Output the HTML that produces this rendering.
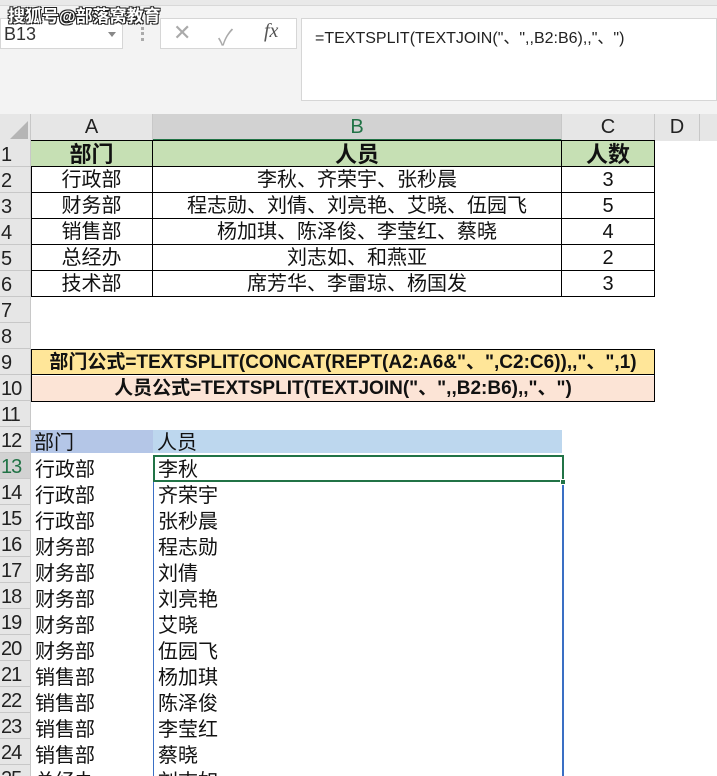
<!DOCTYPE html><html><head><meta charset="utf-8"><style>
*{margin:0;padding:0;box-sizing:border-box}
html,body{width:717px;height:776px;overflow:hidden}
body{background:#fff;position:relative;font-family:"Liberation Sans","Noto Sans CJK SC",sans-serif}
.a{position:absolute}
.rh{position:absolute;left:0;width:31px;height:26px;background:#e6e6e6;border-bottom:1px solid #c8c8c8;border-right:1px solid #c8c8c8;font-size:20px;color:#222;padding-left:1px;line-height:28px;letter-spacing:-1px}
.ch{position:absolute;top:114px;height:27px;background:#e6e6e6;border-right:1px solid #c8c8c8;font-size:20px;text-align:center;line-height:27px;color:#222}
.c{position:absolute;height:26px;line-height:27px;font-size:20px;color:#111;white-space:nowrap}
.t{border-right:1.5px solid #000;border-bottom:1.5px solid #000;text-align:center}
</style></head><body>
<div class="a" style="left:0;top:0;width:717px;height:114px;background:#f3f3f3"></div>
<div class="a" style="left:0;top:0;width:717px;height:6px;background:#e9e9e9;border-bottom:1px solid #d8d8d8"></div>
<div class="a" style="left:0;top:18px;width:123px;height:31px;background:#fff;border:1px solid #d6d6d6"></div>
<div class="a" style="left:4px;top:24px;font-size:18px;color:#333">B13</div>
<div class="a" style="left:108px;top:32px;border-left:4px solid transparent;border-right:4px solid transparent;border-top:5px solid #888"></div>
<div class="a" style="left:141px;top:27px;width:3px;height:14px;border-left:3px dotted #aaa"></div>
<div class="a" style="left:8px;top:2px;font-size:17px;font-weight:bold;color:#fff;text-shadow:1px 1px 0 #222,-1px -1px 0 #222,1px -1px 0 #222,-1px 1px 0 #222">搜狐号@部落窝教育</div>
<div class="a" style="left:160px;top:18px;width:137px;height:31px;background:#fff;border:1px solid #d6d6d6"></div>
<div class="a" style="left:173px;top:20px;font-size:22px;color:#aaa">✕</div>
<div class="a" style="left:218px;top:20px;font-size:22px;color:#aaa">✓</div>
<div class="a" style="left:264px;top:20px;font-size:20px;color:#555;font-family:'Liberation Serif',serif;font-style:italic">fx</div>
<div class="a" style="left:301px;top:18px;width:416px;height:83px;background:#fff;border:1px solid #d6d6d6"></div>
<div class="a" style="left:315px;top:24px;font-size:16px;color:#222">=TEXTSPLIT(TEXTJOIN("、",,B2:B6),,"、")</div>
<div class="ch" style="left:0;width:31px"><div class="a" style="right:2px;bottom:2px;border-left:18px solid transparent;border-bottom:18px solid #b5b5b5"></div></div>
<div class="ch" style="left:31px;width:122px">A</div>
<div class="ch" style="left:153px;width:409px;background:#d2d2d2;border-bottom:2px solid #217346;color:#217346">B</div>
<div class="ch" style="left:562px;width:93px">C</div>
<div class="ch" style="left:655px;width:45px">D</div>
<div class="ch" style="left:700px;width:17px;border-right:none"></div>
<div class="rh" style="top:141px">1</div><div class="rh" style="top:167px">2</div><div class="rh" style="top:193px">3</div><div class="rh" style="top:219px">4</div><div class="rh" style="top:245px">5</div><div class="rh" style="top:271px">6</div><div class="rh" style="top:297px">7</div><div class="rh" style="top:323px">8</div><div class="rh" style="top:349px">9</div><div class="rh" style="top:375px">10</div><div class="rh" style="top:401px">11</div><div class="rh" style="top:427px">12</div><div class="rh" style="top:453px;color:#217346;background:#d2d2d2">13</div><div class="rh" style="top:479px">14</div><div class="rh" style="top:505px">15</div><div class="rh" style="top:531px">16</div><div class="rh" style="top:557px">17</div><div class="rh" style="top:583px">18</div><div class="rh" style="top:609px">19</div><div class="rh" style="top:635px">20</div><div class="rh" style="top:661px">21</div><div class="rh" style="top:687px">22</div><div class="rh" style="top:713px">23</div><div class="rh" style="top:739px">24</div><div class="rh" style="top:765px">25</div>
<div class="a" style="left:31px;top:140px;width:624px;height:157px;border-top:1.5px solid #000;border-left:1.5px solid #000"></div>
<div class="c t" style="left:31px;top:141px;width:122px;background:#c6e0b4;font-weight:bold;font-size:22px">部门</div>
<div class="c t" style="left:153px;top:141px;width:409px;background:#c6e0b4;font-weight:bold;font-size:22px">人员</div>
<div class="c t" style="left:562px;top:141px;width:93px;background:#c6e0b4;font-weight:bold;font-size:22px">人数</div>
<div class="c t" style="left:31px;top:167px;width:122px">行政部</div><div class="c t" style="left:153px;top:167px;width:409px">李秋、齐荣宇、张秒晨</div><div class="c t" style="left:562px;top:167px;width:93px">3</div>
<div class="c t" style="left:31px;top:193px;width:122px">财务部</div><div class="c t" style="left:153px;top:193px;width:409px">程志勋、刘倩、刘亮艳、艾晓、伍园飞</div><div class="c t" style="left:562px;top:193px;width:93px">5</div>
<div class="c t" style="left:31px;top:219px;width:122px">销售部</div><div class="c t" style="left:153px;top:219px;width:409px">杨加琪、陈泽俊、李莹红、蔡晓</div><div class="c t" style="left:562px;top:219px;width:93px">4</div>
<div class="c t" style="left:31px;top:245px;width:122px">总经办</div><div class="c t" style="left:153px;top:245px;width:409px">刘志如、和燕亚</div><div class="c t" style="left:562px;top:245px;width:93px">2</div>
<div class="c t" style="left:31px;top:271px;width:122px">技术部</div><div class="c t" style="left:153px;top:271px;width:409px">席芳华、李雷琼、杨国发</div><div class="c t" style="left:562px;top:271px;width:93px">3</div>
<div class="c" style="left:31px;top:349px;width:624px;height:53px;border:1.5px solid #000"></div>
<div class="c" style="left:32px;top:350px;width:622px;height:25px;background:#ffe699;border-bottom:1.5px solid #000;font-weight:bold;text-align:center;font-size:19px;line-height:26px">部门公式=TEXTSPLIT(CONCAT(REPT(A2:A6&amp;"、",C2:C6)),,"、",1)</div>
<div class="c" style="left:32px;top:376px;width:622px;height:25px;background:#fce4d6;font-weight:bold;text-align:center;font-size:19px;line-height:26px">人员公式=TEXTSPLIT(TEXTJOIN("、",,B2:B6),,"、")</div>
<div class="c" style="left:31px;top:430px;width:122px;height:23px;background:#b4c6e7;padding-left:3px;line-height:26px">部门</div>
<div class="c" style="left:153px;top:430px;width:409px;height:23px;background:#bdd7ee;padding-left:4px;line-height:26px">人员</div>
<div class="a" style="left:562px;top:480px;width:1.5px;height:296px;background:#3a6fc4"></div>
<div class="a" style="left:153px;top:480px;width:1px;height:296px;background:#3a6fc4"></div>
<div class="a" style="left:153px;top:455px;width:411px;height:27px;border:2px solid #217346"></div>
<div class="a" style="left:560px;top:479px;width:6px;height:6px;background:#217346;border:1px solid #fff"></div>
<div class="c" style="left:35px;top:457px">行政部</div><div class="c" style="left:158px;top:457px">李秋</div>
<div class="c" style="left:35px;top:483px">行政部</div><div class="c" style="left:158px;top:483px">齐荣宇</div>
<div class="c" style="left:35px;top:509px">行政部</div><div class="c" style="left:158px;top:509px">张秒晨</div>
<div class="c" style="left:35px;top:535px">财务部</div><div class="c" style="left:158px;top:535px">程志勋</div>
<div class="c" style="left:35px;top:561px">财务部</div><div class="c" style="left:158px;top:561px">刘倩</div>
<div class="c" style="left:35px;top:587px">财务部</div><div class="c" style="left:158px;top:587px">刘亮艳</div>
<div class="c" style="left:35px;top:613px">财务部</div><div class="c" style="left:158px;top:613px">艾晓</div>
<div class="c" style="left:35px;top:639px">财务部</div><div class="c" style="left:158px;top:639px">伍园飞</div>
<div class="c" style="left:35px;top:665px">销售部</div><div class="c" style="left:158px;top:665px">杨加琪</div>
<div class="c" style="left:35px;top:691px">销售部</div><div class="c" style="left:158px;top:691px">陈泽俊</div>
<div class="c" style="left:35px;top:717px">销售部</div><div class="c" style="left:158px;top:717px">李莹红</div>
<div class="c" style="left:35px;top:743px">销售部</div><div class="c" style="left:158px;top:743px">蔡晓</div>
<div class="c" style="left:35px;top:769px">总经办</div><div class="c" style="left:158px;top:769px">刘志如</div>
</body></html>
